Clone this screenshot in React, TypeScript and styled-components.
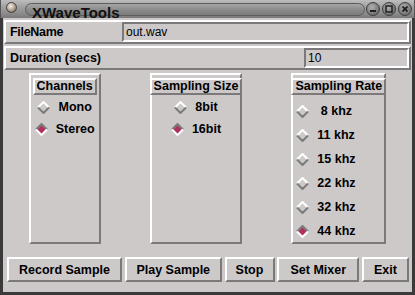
import React from "react";
import styled, { createGlobalStyle, css } from "styled-components";

const BG = "#cdc9c9";
const DARK = "#7b7979";
const LIGHT = "#ffffff";
const SEL = "#b03060";

const Global = createGlobalStyle`
  html, body { margin: 0; padding: 0; background: ${BG}; }
  body { font-family: "Liberation Sans", Arial, Helvetica, sans-serif; color: #000; }
  * { box-sizing: border-box; }
`;

const raised = css`
  border: 2px solid;
  border-color: ${LIGHT} ${DARK} ${DARK} ${LIGHT};
`;
const sunken = css`
  border: 2px solid;
  border-color: ${DARK} ${LIGHT} ${LIGHT} ${DARK};
`;

const Window = styled.div`
  width: 415px;
  height: 295px;
  display: flex;
  flex-direction: column;
  overflow: hidden;
  background: ${BG};
`;

const TitleBar = styled.div`
  height: 18px;
  flex: none;
  display: flex;
  align-items: flex-start;
  overflow: hidden;
  background: linear-gradient(#bdbdbd, #a2a2a2 35%, #8e8e8e 70%, #7a7a7a);
  border-left: 1px solid #555;
  border-right: 1px solid #555;
`;

const Knob = styled.div`
  flex: none;
  width: 11px;
  height: 11px;
  margin: 2px 0 0 5px;
  border-radius: 50%;
  border: 1px solid #4a4238;
  background: radial-gradient(circle at 40% 35%, #f2eee8 0%, #c8beb0 35%, #8a7c6a 75%, #5a5046 100%);
`;

const TitlePill = styled.div`
  flex: 1;
  height: 13px;
  margin: 3px 1px 0 8px;
  padding-left: 6px;
  border: 1px solid #5c5c5c;
  border-radius: 7px;
  background: linear-gradient(#a6a6a6, #8c8c8c 50%, #7c7c7c);
  overflow: visible;
`;

const TitleText = styled.div`
  font-weight: bold;
  font-size: 15px;
  line-height: 15px;
  margin-top: 1px;
  color: #111;
  white-space: nowrap;
`;

const WinButtons = styled.div`
  flex: none;
  display: flex;
  gap: 2px;
  margin: 2px 2px 0 0;
`;

const WinBtn = styled.div`
  width: 14px;
  height: 14px;
  border-radius: 50%;
  border: 1px solid #3e3e3e;
  background: radial-gradient(circle at 40% 35%, #b0b0b0 0%, #808080 55%, #5a5a5a 100%);
  display: flex;
  align-items: center;
  justify-content: center;
`;

const Body = styled.div`
  flex: 1;
  display: flex;
  flex-direction: column;
  border-style: solid;
  border-color: #3a3a3a;
  border-width: 0 3px 3px 3px;
  padding: 2px 1px 0 1px;
`;

const FieldRow = styled.div<{ $mt: number }>`
  ${raised};
  height: 24px;
  margin-top: ${(p) => p.$mt}px;
  display: flex;
  align-items: center;
  flex: none;
`;

const FieldLabel = styled.div`
  flex: 1;
  padding-left: 4px;
  font-weight: bold;
  font-size: 12.5px;
  white-space: nowrap;
`;

const Entry = styled.div<{ $w: number }>`
  ${sunken};
  width: ${(p) => p.$w}px;
  height: 20px;
  padding-left: 2px;
  font-size: 12px;
  line-height: 16px;
  white-space: nowrap;
  background: ${BG};
`;

const Groups = styled.div`
  margin-top: 3px;
  height: 171px;
  flex: none;
  display: flex;
  justify-content: space-around;
`;

const GroupBox = styled.div<{ $w: number }>`
  ${raised};
  width: ${(p) => p.$w}px;
  height: 100%;
  display: flex;
  flex-direction: column;
  align-items: center;
`;

const GroupHeader = styled.div`
  ${raised};
  margin-top: 3px;
  height: 17px;
  padding: 0 2px;
  font-weight: bold;
  font-size: 12.5px;
  line-height: 13px;
  white-space: nowrap;
`;

const OptionList = styled.div<{ $mt: number; $left: boolean }>`
  margin-top: ${(p) => p.$mt}px;
  display: flex;
  flex-direction: column;
  align-items: ${(p) => (p.$left ? "stretch" : "center")};
  align-self: stretch;
`;

const Option = styled.div<{ $h: number; $left: boolean }>`
  height: ${(p) => p.$h}px;
  display: flex;
  align-items: center;
  gap: 8px;
  padding-left: ${(p) => (p.$left ? 3 : 0)}px;
  font-weight: bold;
  font-size: 12.5px;
  white-space: nowrap;
`;

const ButtonBar = styled.div`
  margin-top: 13px;
  height: 25px;
  flex: none;
  display: flex;
  justify-content: space-between;
  padding: 0 2px 0 3px;
`;

const PushButton = styled.button<{ $w: number }>`
  ${raised};
  width: ${(p) => p.$w}px;
  height: 25px;
  padding: 0;
  background: ${BG};
  color: #000;
  font-family: "Liberation Sans", Arial, Helvetica, sans-serif;
  font-weight: bold;
  font-size: 12.5px;
  white-space: nowrap;
  cursor: default;
`;

const Diamond = ({ on }: { on: boolean }) => (
  <svg width="13" height="13" viewBox="0 0 13 13" style={{ flex: "none" }}>
    {on && <polygon points="6.5,2 11,6.5 6.5,11 2,6.5" fill={SEL} />}
    <polyline points="1,6.5 6.5,1 12,6.5" fill="none" stroke={on ? DARK : LIGHT} strokeWidth="2" />
    <polyline points="1,6.5 6.5,12 12,6.5" fill="none" stroke={on ? LIGHT : DARK} strokeWidth="2" />
  </svg>
);

type GroupDef = {
  title: string;
  width: number;
  options: string[];
  selected: number;
  itemH: number;
  mt: number;
  left: boolean;
};

const groups: GroupDef[] = [
  { title: "Channels", width: 72, options: ["Mono", "Stereo"], selected: 1, itemH: 22, mt: 1, left: false },
  { title: "Sampling Size", width: 92, options: ["8bit", "16bit"], selected: 1, itemH: 22, mt: 1, left: false },
  {
    title: "Sampling Rate",
    width: 95,
    options: ["\u00a08 khz", "11 khz", "15 khz", "22 khz", "32 khz", "44 khz"],
    selected: 5,
    itemH: 24,
    mt: 4,
    left: true,
  },
];

const buttons: { label: string; w: number }[] = [
  { label: "Record Sample", w: 115 },
  { label: "Play Sample", w: 97 },
  { label: "Stop", w: 50 },
  { label: "Set Mixer", w: 82 },
  { label: "Exit", w: 47 },
];

export default function App() {
  return (
    <>
      <Global />
      <Window>
        <TitleBar>
          <Knob />
          <TitlePill>
            <TitleText>XWaveTools</TitleText>
          </TitlePill>
          <WinButtons>
            <WinBtn>
              <svg width="8" height="8" viewBox="0 0 8 8">
                <rect x="1" y="5" width="6" height="2" fill="#222" />
              </svg>
            </WinBtn>
            <WinBtn>
              <svg width="8" height="8" viewBox="0 0 8 8">
                <rect x="1" y="1" width="6" height="6" fill="none" stroke="#222" strokeWidth="1.5" />
              </svg>
            </WinBtn>
            <WinBtn>
              <svg width="8" height="8" viewBox="0 0 8 8">
                <path d="M1.5 1.5 L6.5 6.5 M6.5 1.5 L1.5 6.5" stroke="#222" strokeWidth="1.8" />
              </svg>
            </WinBtn>
          </WinButtons>
        </TitleBar>
        <Body>
          <FieldRow $mt={0}>
            <FieldLabel style={{ letterSpacing: "-0.3px" }}>FileName</FieldLabel>
            <Entry $w={287}>out.wav</Entry>
          </FieldRow>
          <FieldRow $mt={2}>
            <FieldLabel>Duration (secs)</FieldLabel>
            <Entry $w={105}>10</Entry>
          </FieldRow>
          <Groups>
            {groups.map((g) => (
              <GroupBox key={g.title} $w={g.width}>
                <GroupHeader>{g.title}</GroupHeader>
                <OptionList $mt={g.mt} $left={g.left}>
                  {g.options.map((o, i) => (
                    <Option key={o} $h={g.itemH} $left={g.left}>
                      <Diamond on={i === g.selected} />
                      {o}
                    </Option>
                  ))}
                </OptionList>
              </GroupBox>
            ))}
          </Groups>
          <ButtonBar>
            {buttons.map((b) => (
              <PushButton key={b.label} $w={b.w}>
                {b.label}
              </PushButton>
            ))}
          </ButtonBar>
        </Body>
      </Window>
    </>
  );
}
